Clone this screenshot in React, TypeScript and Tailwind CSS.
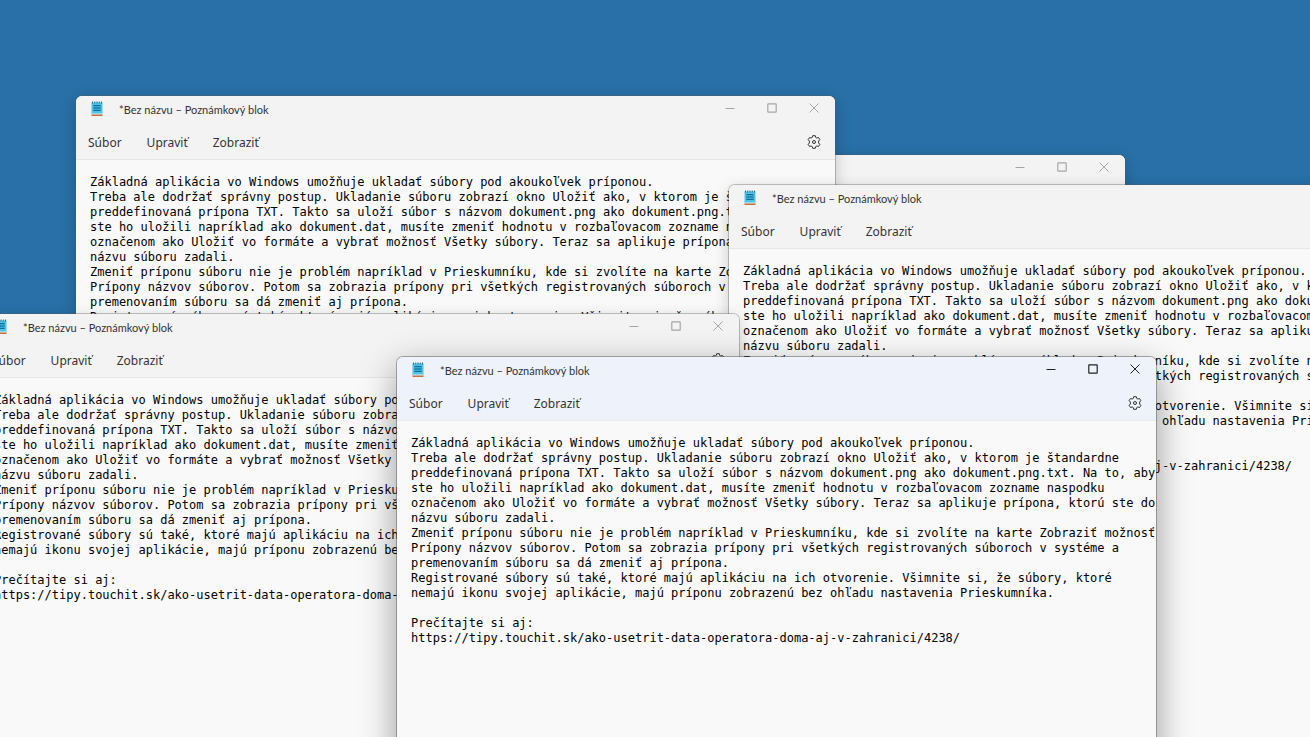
import React from "react";

const documentText = `Základná aplikácia vo Windows umožňuje ukladať súbory pod akoukoľvek príponou.
Treba ale dodržať správny postup. Ukladanie súboru zobrazí okno Uložiť ako, v ktorom je štandardne
preddefinovaná prípona TXT. Takto sa uloží súbor s názvom dokument.png ako dokument.png.txt. Na to, aby
ste ho uložili napríklad ako dokument.dat, musíte zmeniť hodnotu v rozbaľovacom zozname naspodku
označenom ako Uložiť vo formáte a vybrať možnosť Všetky súbory. Teraz sa aplikuje prípona, ktorú ste do
názvu súboru zadali.
Zmeniť príponu súboru nie je problém napríklad v Prieskumníku, kde si zvolíte na karte Zobraziť možnosť
Prípony názvov súborov. Potom sa zobrazia prípony pri všetkých registrovaných súboroch v systéme a
premenovaním súboru sa dá zmeniť aj prípona.
Registrované súbory sú také, ktoré majú aplikáciu na ich otvorenie. Všimnite si, že súbory, ktoré
nemajú ikonu svojej aplikácie, majú príponu zobrazenú bez ohľadu nastavenia Prieskumníka.

Prečítajte si aj:
https://tipy.touchit.sk/ako-usetrit-data-operatora-doma-aj-v-zahranici/4238/`;

function NotepadIcon() {
  return (
    <svg width="12" height="16" viewBox="0 0 12 16" aria-hidden="true">
      <rect x="0.5" y="13" width="11" height="2" rx="0.5" fill="#c4713c" />
      <rect x="0.5" y="1.5" width="11" height="11.5" fill="#50c4e6" />
      <rect x="0.5" y="12.5" width="11" height="1" fill="#dcecf2" />
      <path d="M1.500 0.500v2M3.750 0.500v2M6 0.500v2M8.250 0.500v2M10.500 0.500v2" stroke="#1b6f8f" strokeWidth="1" />
      <rect x="2" y="4" width="8" height="6" fill="#36add4" />
      <path d="M2.500 4.500h7M2.500 7h7M2.500 9.500h7" stroke="#0f6f96" strokeWidth="1" />
    </svg>
  );
}

function GearIcon() {
  return (
    <svg width="14" height="14" viewBox="0 0 14 14" fill="none" stroke="currentColor" strokeWidth="1" strokeLinejoin="round" aria-hidden="true">
      <path d="M5.700 0.700h2.600l.4 1.700 1.100.6 1.700-.5 1.400 2.200-1.300 1.300v2l1.300 1.300-1.400 2.200-1.700-.5-1.100.6-.4 1.700H5.700l-.4-1.700-1.100-.6-1.700.5L1.100 9.300l1.300-1.300V6L1.100 4.700l1.400-2.200 1.700.5 1.100-.6z" />
      <circle cx="7" cy="7" r="1.500" />
    </svg>
  );
}

type WindowProps = { place: string; name: string; active?: boolean };

function NotepadWindow({ place, name, active = false }: WindowProps) {
  const header = active ? "bg-[#eef3fb]" : "bg-[#f3f3f3]";
  const control = active ? "text-[#222222]" : "text-[#a6a6a6]";
  const shadow = active
    ? "shadow-[0_0_0_1px_rgba(90,90,90,0.5),0_12px_36px_rgba(0,0,0,0.4)]"
    : "shadow-[0_0_0_1px_rgba(90,90,90,0.35),0_4px_16px_rgba(0,0,0,0.2)]";
  return (
    <section
      aria-label={name}
      className={`absolute flex h-[560px] w-[759px] flex-col overflow-hidden rounded-md bg-[#f9f9f9] ${shadow} ${place}`}
    >
      <header className={`border-b ${active ? "border-[#e6ebf1]" : "border-[#e6e6e6]"} ${header}`}>
        <div className="flex h-[26px] items-center">
          <div className="flex flex-1 items-center gap-4 pl-[15px]">
            <NotepadIcon />
            <h2 className="pt-0.5 font-['Lato',sans-serif] text-[11px] leading-4 text-[#333333]">
              *Bez názvu – Poznámkový blok
            </h2>
          </div>
          <div className={`flex h-full pb-0.5 ${control}`}>
            <button type="button" aria-label="Minimalizovať" className="flex w-[42px] items-center justify-center">
              <svg width="10" height="10" viewBox="0 0 10 10" stroke="currentColor" aria-hidden="true">
                <path d="M0.500 5.500h9" />
              </svg>
            </button>
            <button type="button" aria-label="Maximalizovať" className="flex w-[42px] items-center justify-center">
              <svg width="10" height="10" viewBox="0 0 10 10" fill="none" stroke="currentColor" aria-hidden="true">
                <rect x="0.8" y="0.8" width="8.400" height="8.400" rx="0.5" strokeWidth="1.200" />
              </svg>
            </button>
            <button type="button" aria-label="Zavrieť" className="flex w-[42px] items-center justify-center">
              <svg width="10" height="10" viewBox="0 0 10 10" stroke="currentColor" aria-hidden="true">
                <path d="M0.500 0.500l9 9M9.500 0.500l-9 9" />
              </svg>
            </button>
          </div>
        </div>
        <div className="flex h-[37px] items-center justify-between pt-1 text-[#333333]">
          <nav className="flex gap-[25px] pl-3 font-['Noto_Sans','Open_Sans',sans-serif] text-[12px] leading-4">
            <button type="button">Súbor</button>
            <button type="button">Upraviť</button>
            <button type="button">Zobraziť</button>
          </nav>
          <button type="button" aria-label="Nastavenia" className="flex w-[42px] items-center justify-center pb-0.5">
            <GearIcon />
          </button>
        </div>
      </header>
      <textarea
        aria-label="Text dokumentu"
        wrap="off"
        spellCheck={false}
        defaultValue={documentText}
        className="w-full flex-1 resize-none overflow-hidden bg-transparent pt-[15px] pl-[14px] font-['DejaVu_Sans_Mono','Liberation_Mono',monospace] text-[12px] leading-[15px] whitespace-pre text-black outline-none"
      />
    </section>
  );
}

export default function App() {
  return (
    <main className="relative h-screen overflow-hidden bg-[#2870a7]">
      <NotepadWindow name="Poznámkový blok 1" place="left-[366px] top-[155px]" />
      <NotepadWindow name="Poznámkový blok 2" place="left-[76px] top-[96px]" />
      <NotepadWindow name="Poznámkový blok 3" place="left-[729px] top-[185px]" />
      <NotepadWindow name="Poznámkový blok 4" place="left-[-20px] top-[314px]" />
      <NotepadWindow name="Poznámkový blok 5" place="left-[397px] top-[357px]" active />
    </main>
  );
}
